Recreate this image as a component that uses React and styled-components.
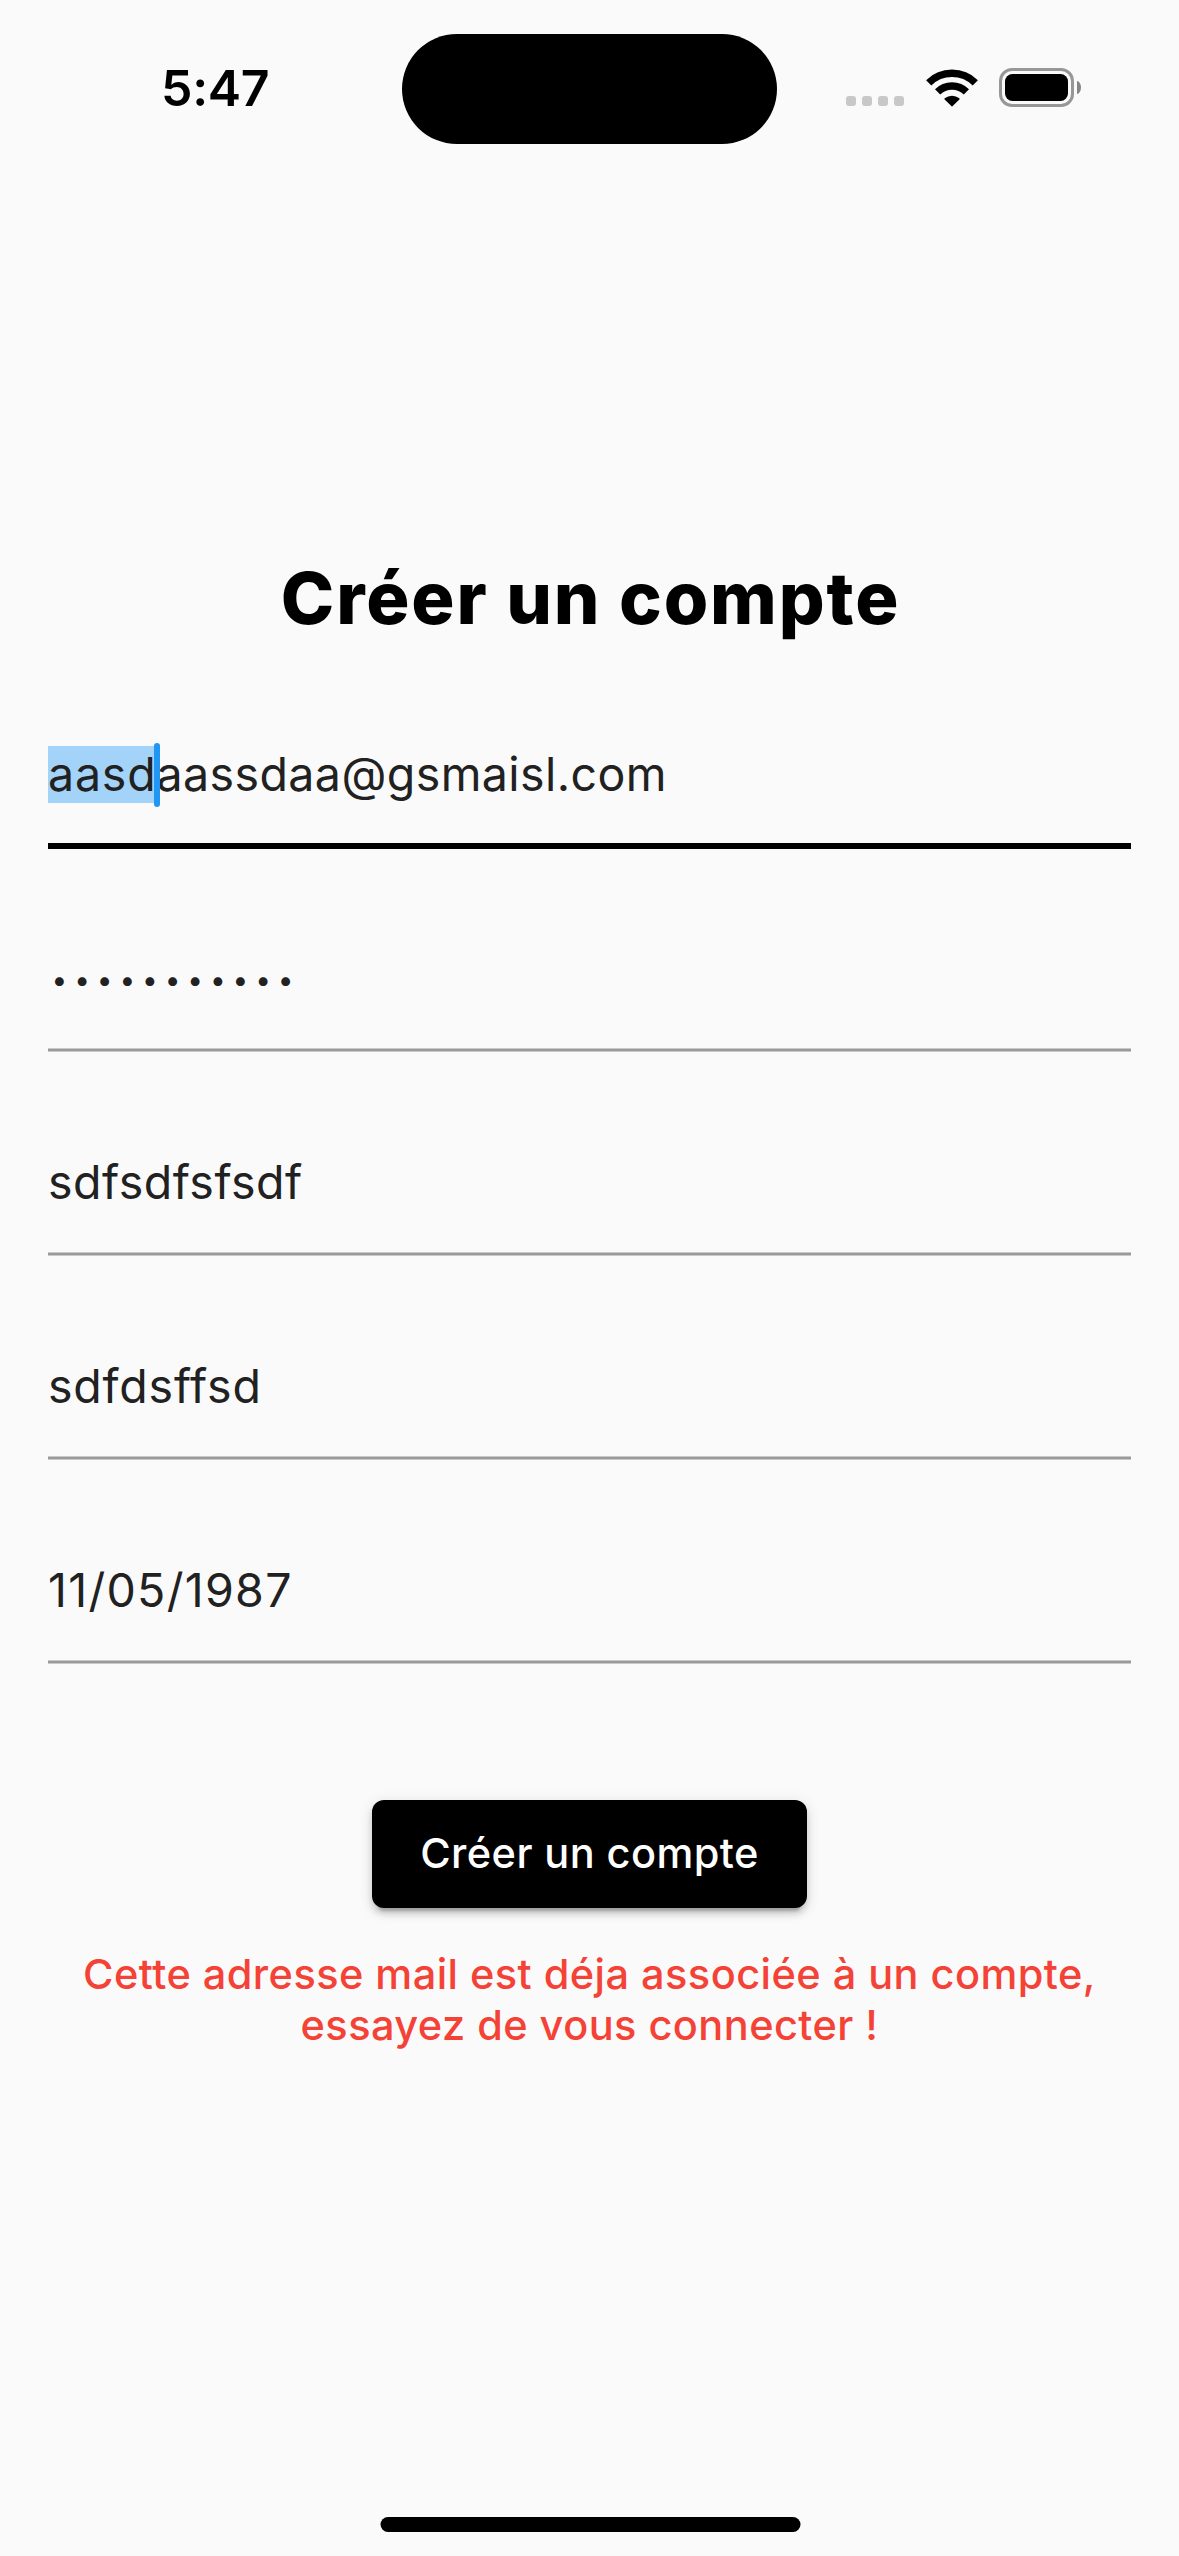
import React from "react";
import styled, { createGlobalStyle } from "styled-components";

const GlobalStyle = createGlobalStyle`
  *, *::before, *::after { box-sizing: border-box; }
  body {
    margin: 0;
    background: #fafafa;
    font-family: Inter, "Liberation Sans", sans-serif;
  }
`;

const Screen = styled.div`
  display: flex;
  flex-direction: column;
  width: 1179px;
  height: 2556px;
  overflow: hidden;
  background: #fafafa;
`;

const StatusBar = styled.header`
  display: grid;
  grid-template-columns: 402px 375px 1fr;
  height: 178px;
  flex: none;
`;

const Time = styled.time`
  padding: 58px 0 0 161px;
  font-size: 50px;
  font-weight: 600;
  line-height: 60px;
  letter-spacing: -0.3px;
  color: #000;
`;

const Island = styled.div`
  height: 110px;
  margin-top: 34px;
  border-radius: 55px;
  background: #000;
`;

const StatusIcons = styled.div`
  display: flex;
  align-items: flex-end;
  height: 107px;
  padding-left: 69px;
`;

const Signal = styled.div`
  display: flex;
  gap: 6px;
  margin-bottom: 1px;
`;

const SignalDot = styled.span`
  width: 10px;
  height: 10px;
  border-radius: 3px;
  background: #c8c8c8;
`;

const Wifi = styled.svg`
  display: block;
  width: 52px;
  height: 38px;
  margin: 0 21.5px 0.5px 21.5px;
`;

const Battery = styled.div`
  display: flex;
  align-items: center;
  gap: 3px;
`;

const BatteryShell = styled.div`
  width: 75px;
  height: 39px;
  padding: 3px;
  border: 3px solid #979797;
  border-radius: 13px;
`;

const BatteryLevel = styled.div`
  height: 100%;
  border-radius: 7.5px;
  background: #000;
`;

const BatteryCap = styled.div`
  width: 4px;
  height: 13px;
  border-radius: 0 4px 4px 0 / 0 6.5px 6.5px 0;
  background: #868686;
`;

const Main = styled.main`
  display: flex;
  flex-direction: column;
  align-items: center;
  flex: 1;
  padding: 378px 48px 0;
`;

const Title = styled.h1`
  margin: 0 0 106px;
  padding-left: 2px;
  font-size: 72px;
  font-weight: 800;
  line-height: 83px;
  letter-spacing: 1.86px;
  color: #000;
`;

const Form = styled.div`
  display: flex;
  flex-direction: column;
  gap: 100px;
  width: 100%;
`;

const Field = styled.div`
  display: flex;
  flex-direction: column;
  gap: 40px;
`;

const Value = styled.div`
  height: 58px;
  font-size: 46.5px;
  line-height: 58px;
  letter-spacing: ${(p) => p.$spacing}px;
  white-space: nowrap;
  color: #212121;
`;

const Masked = styled(Value)`
  padding: 2px 0 0 3.5px;
  font-size: 28px;
`;

const Underline = styled.div`
  height: ${(p) => (p.$focused ? 6 : 4)}px;
  margin: ${(p) => (p.$focused ? 0 : 1)}px 0;
  background: ${(p) => (p.$focused ? "#000" : "#999")};
  border: solid #c9c9c9;
  border-width: ${(p) => (p.$focused ? 0 : "1px 0")};
`;

const Selection = styled.span`
  position: relative;
  padding-bottom: 1px;
  letter-spacing: 0.8px;
  background: #a3d3f8;
`;

const Caret = styled.span`
  position: absolute;
  top: -3px;
  right: -3.5px;
  width: 6px;
  height: 64px;
  border-radius: 3px;
  background: #2196f3;
`;

const SubmitButton = styled.button`
  width: 435px;
  height: 108px;
  margin: 135px 0 0;
  padding: 0 0 1px;
  border: 0;
  border-radius: 12px;
  background: #000;
  box-shadow:
    0 9px 3px -6px rgba(0, 0, 0, 0.2),
    0 6px 6px rgba(0, 0, 0, 0.14),
    0 3px 15px rgba(0, 0, 0, 0.12);
  color: #fff;
  font: 500 41.5px/49px Inter, "Liberation Sans", sans-serif;
  letter-spacing: 0.42px;
`;

const ErrorText = styled.p`
  margin: 41px 0 0;
  font-size: 41.5px;
  font-weight: 500;
  line-height: 51px;
  letter-spacing: 0.45px;
  text-align: center;
  color: #f44336;
`;

const HomeIndicator = styled.div`
  flex: none;
  align-self: center;
  width: 420px;
  height: 15px;
  margin-bottom: 24px;
  border-radius: 7.5px;
  background: #000;
  transform: translateX(0.5px);
`;

export default function App() {
  return (
    <Screen>
      <GlobalStyle />
      <StatusBar>
        <Time>5:47</Time>
        <Island />
        <StatusIcons>
          <Signal>
            {[0, 1, 2, 3].map((i) => (
              <SignalDot key={i} />
            ))}
          </Signal>
          <Wifi viewBox="0 0 52 38" aria-hidden="true">
            <path d="M2.7 13.8A33.3 33.3 0 0 1 49.3 13.8" fill="none" stroke="#000" strokeWidth="7.4" />
            <path d="M11.6 22.9A20.5 20.5 0 0 1 40.4 22.9" fill="none" stroke="#000" strokeWidth="7.4" />
            <path d="M18.6 30.4Q18.1 29.9 18.7 29.3A11.6 11.6 0 0 1 33.3 29.3Q33.9 29.9 33.4 30.4L26.4 37.3Q26 37.7 25.6 37.3Z" fill="#000" />
          </Wifi>
          <Battery>
            <BatteryShell>
              <BatteryLevel />
            </BatteryShell>
            <BatteryCap />
          </Battery>
        </StatusIcons>
      </StatusBar>
      <Main>
        <Title>Créer un compte</Title>
        <Form>
          <Field>
            <Value $spacing={0.42}>
              <Selection>
                aasd
                <Caret />
              </Selection>
              aassdaa@gsmaisl.com
            </Value>
            <Underline $focused />
          </Field>
          <Field>
            <Masked $spacing={6.88}>•••••••••••</Masked>
            <Underline />
          </Field>
          <Field>
            <Value $spacing={0.5}>sdfsdfsfsdf</Value>
            <Underline />
          </Field>
          <Field>
            <Value $spacing={0.8}>sdfdsffsd</Value>
            <Underline />
          </Field>
          <Field>
            <Value $spacing={1.3}>11/05/1987</Value>
            <Underline />
          </Field>
        </Form>
        <SubmitButton>Créer un compte</SubmitButton>
        <ErrorText>Cette adresse mail est déja associée à un compte, essayez de vous connecter !</ErrorText>
      </Main>
      <HomeIndicator />
    </Screen>
  );
}
